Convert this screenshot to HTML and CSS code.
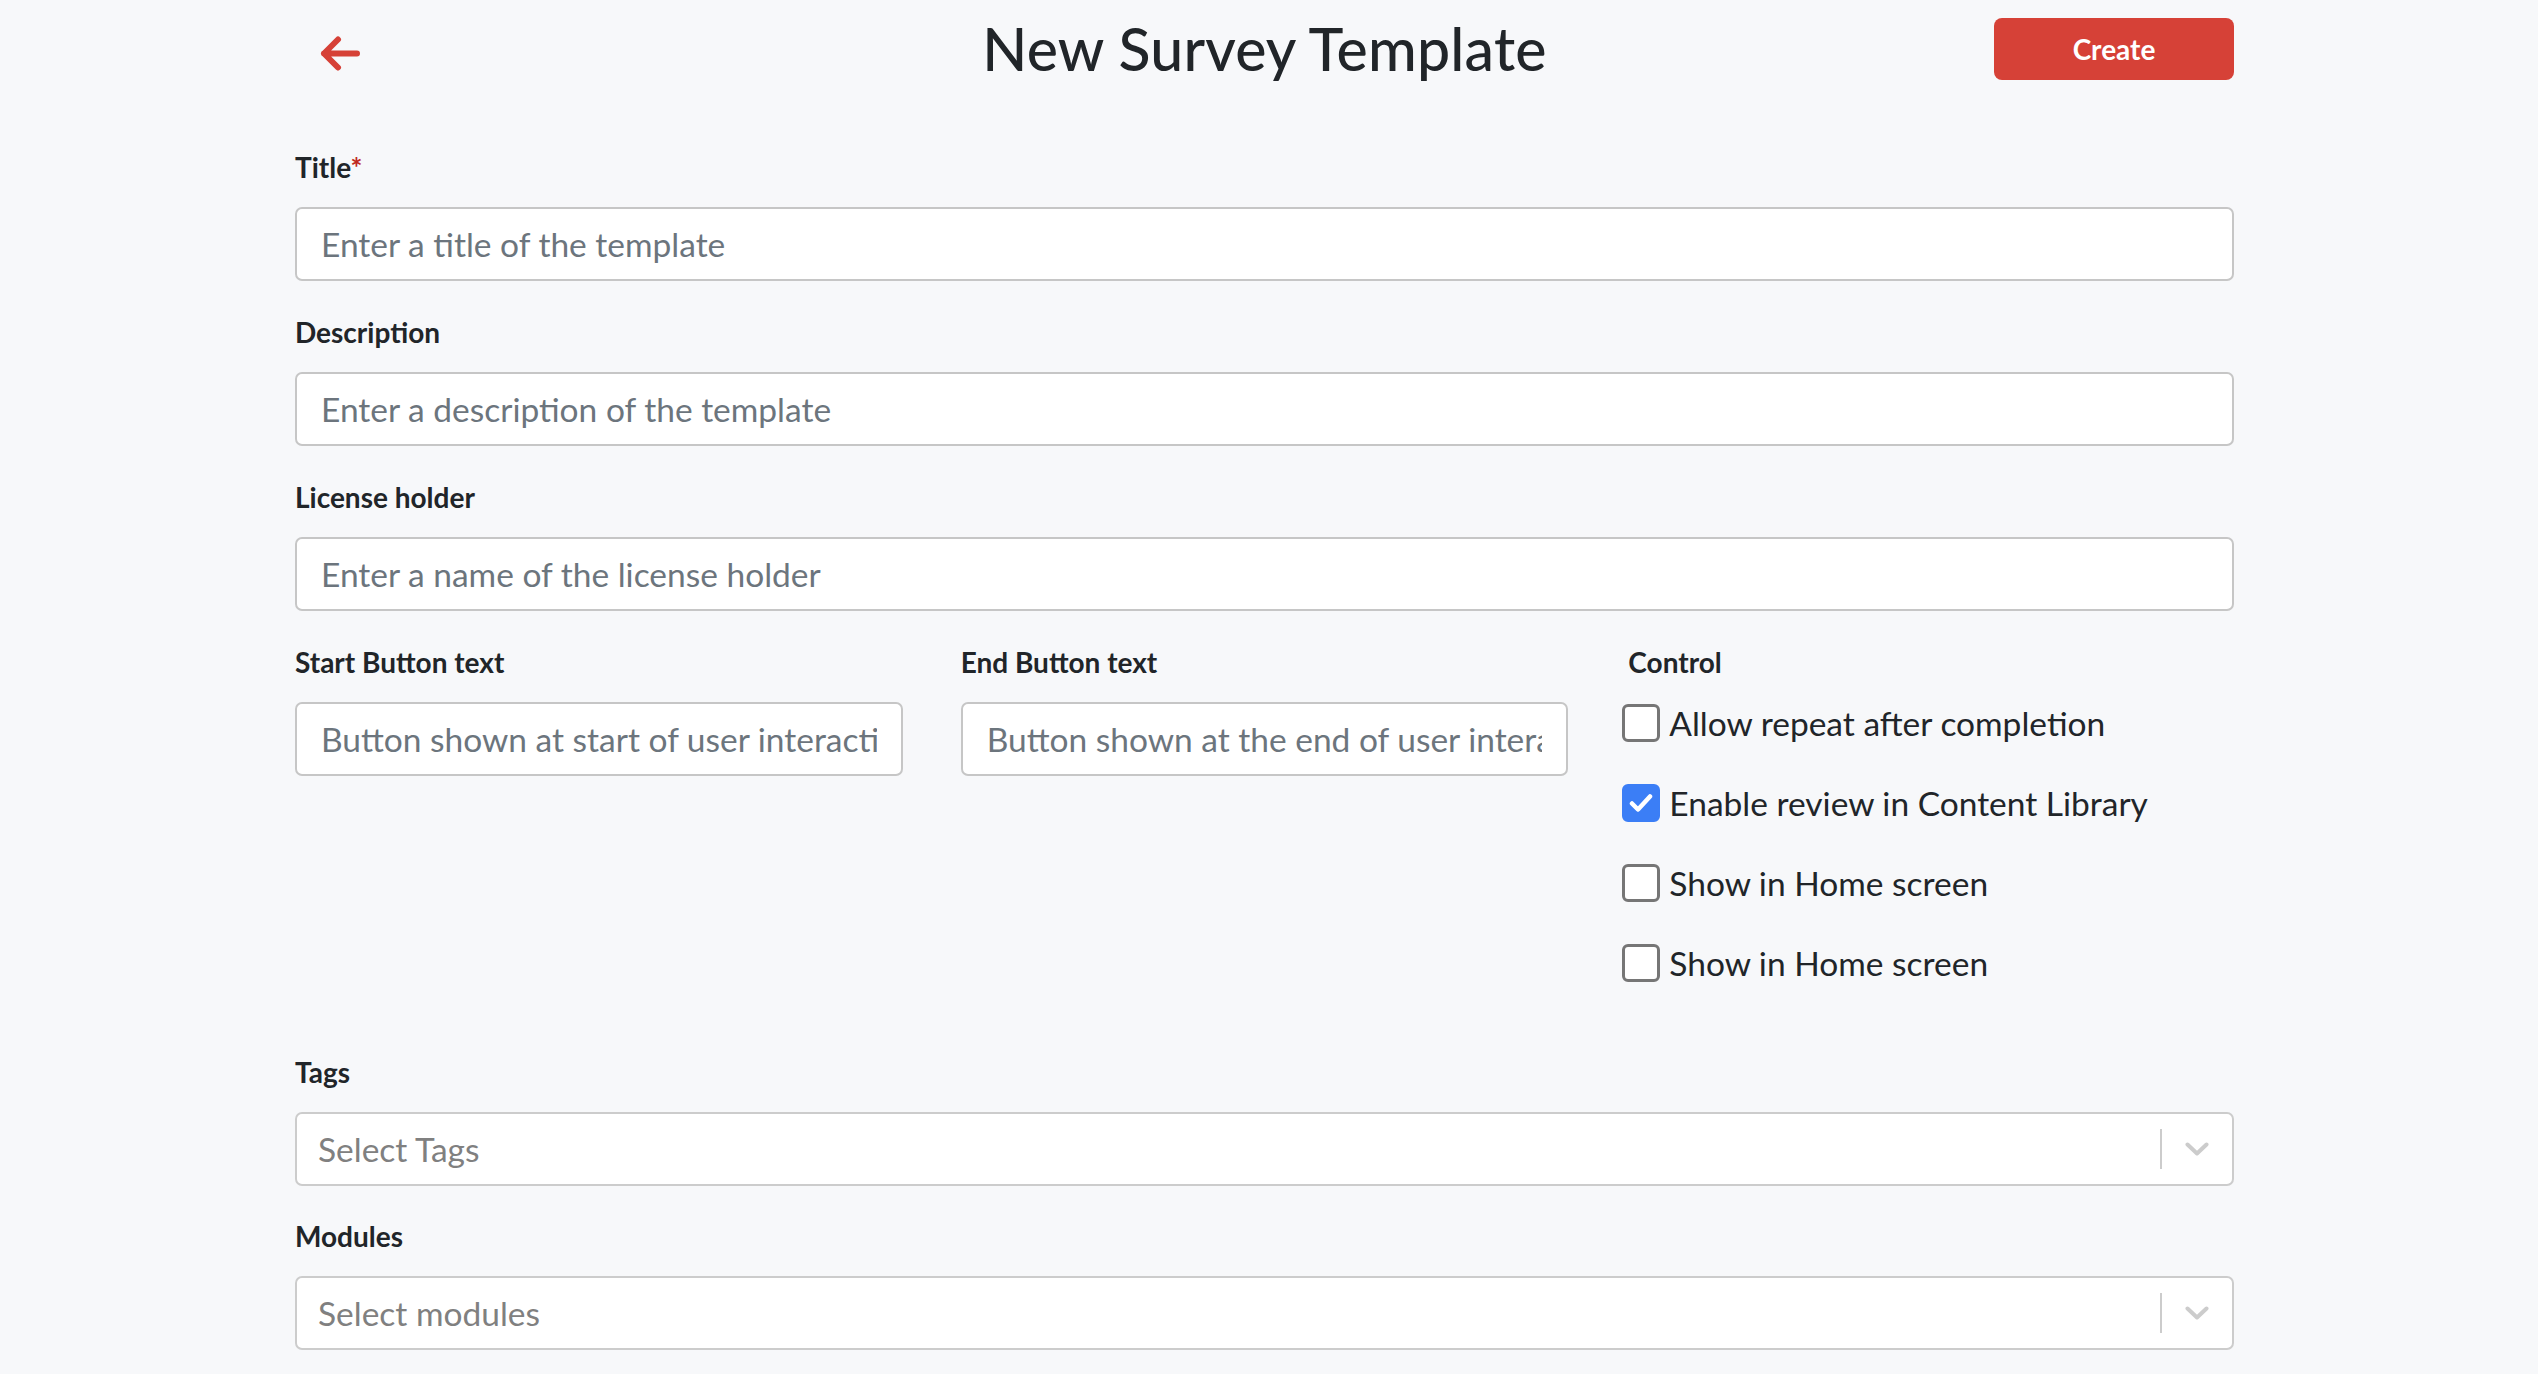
FILE: index.html
```html
<!DOCTYPE html>
<html lang="en">
<head>
<meta charset="utf-8">
<title>New Survey Template</title>
<link rel="stylesheet" href="styles.css">
</head>
<body>
<div class="page">
  <header class="header">
    <a class="back" href="#" aria-label="Back">
      <svg width="40" height="37" viewBox="0 0 40 37" fill="none" stroke="#d64137" stroke-width="6" stroke-linecap="round" stroke-linejoin="round"><path d="M37 18.5H4M18 4.5L4 18.5L18 32.5"/></svg>
    </a>
    <h1 class="page-title">New Survey Template</h1>
    <button class="btn-create" type="button">Create</button>
  </header>

  <form class="form">
    <div class="group">
      <label class="label">Title<span class="req">*</span></label>
      <input class="input" type="text" placeholder="Enter a title of the template">
    </div>
    <div class="group">
      <label class="label">Description</label>
      <input class="input" type="text" placeholder="Enter a description of the template">
    </div>
    <div class="group">
      <label class="label">License holder</label>
      <input class="input" type="text" placeholder="Enter a name of the license holder">
    </div>

    <div class="row">
      <div class="col">
        <label class="label">Start Button text</label>
        <input class="input" type="text" placeholder="Button shown at start of user interaction">
      </div>
      <div class="col">
        <label class="label">End Button text</label>
        <input class="input" type="text" placeholder="Button shown at the end of user interaction">
      </div>
      <div class="col">
        <label class="label label-control">Control</label>
        <div class="checks">
          <div class="check"><span class="box"></span><span class="check-text">Allow repeat after completion</span></div>
          <div class="check"><span class="box box-on"><svg width="24" height="20" viewBox="0 0 24 20" fill="none" stroke="#fff" stroke-width="4.5" stroke-linecap="round" stroke-linejoin="round"><path d="M3 10.5L9 16.5L21 3.5"/></svg></span><span class="check-text">Enable review in Content Library</span></div>
          <div class="check"><span class="box"></span><span class="check-text">Show in Home screen</span></div>
          <div class="check"><span class="box"></span><span class="check-text">Show in Home screen</span></div>
        </div>
      </div>
    </div>

    <div class="group group-select">
      <label class="label">Tags</label>
      <div class="select">
        <span class="select-value">Select Tags</span>
        <span class="select-sep"></span>
        <span class="select-ind"><svg width="24" height="14" viewBox="0 0 24 14" fill="none" stroke="#cccccc" stroke-width="4" stroke-linecap="round" stroke-linejoin="round"><path d="M2.5 2.5L12 11.5L21.5 2.5"/></svg></span>
      </div>
    </div>
    <div class="group group-select">
      <label class="label">Modules</label>
      <div class="select">
        <span class="select-value">Select modules</span>
        <span class="select-sep"></span>
        <span class="select-ind"><svg width="24" height="14" viewBox="0 0 24 14" fill="none" stroke="#cccccc" stroke-width="4" stroke-linecap="round" stroke-linejoin="round"><path d="M2.5 2.5L12 11.5L21.5 2.5"/></svg></span>
      </div>
    </div>
  </form>
</div>
</body>
</html>
```
FILE: styles.css
```css
html, body {
  margin: 0;
  padding: 0;
  background: #f7f8fa;
}
body {
  font-family: Lato, "Open Sans", sans-serif;
  color: #212529;
  overflow: hidden;
}
.page {
  width: 1939px;
  margin-left: 295px;
}
.header {
  height: 98px;
  display: grid;
  grid-template-columns: 1fr auto 1fr;
  align-items: center;
}
.back {
  display: flex;
  padding-left: 25px;
  margin-top: 8px;
  width: 40px;
}
.page-title {
  margin: 0;
  font-size: 59px;
  font-weight: 500;
  line-height: 70px;
  color: #212529;
  letter-spacing: 0.2px;
}
.btn-create {
  justify-self: end;
  width: 240px;
  height: 62px;
  border: 0;
  border-radius: 8px;
  background: #d64137;
  color: #fff;
  font-family: Lato, sans-serif;
  font-size: 28px;
  font-weight: 700;
  padding: 0;
  cursor: pointer;
}
.form {
  margin-top: 53px;
  display: flex;
  flex-direction: column;
}
.group {
  display: flex;
  flex-direction: column;
  margin-bottom: 35px;
}
.group-select {
  margin-bottom: 34px;
}
.label {
  display: block;
  font-size: 28px;
  line-height: 32px;
  font-weight: 700;
  color: #212529;
  margin-bottom: 24px;
}
.req {
  color: #c0281d;
}
.input {
  box-sizing: border-box;
  width: 100%;
  height: 74px;
  border: 2px solid #c6c6c6;
  border-radius: 7px;
  background: #fff;
  padding: 0 24px;
  font-family: Lato, sans-serif;
  font-size: 33.5px;
  color: #212529;
  outline: none;
}
.input::placeholder {
  color: #6c757d;
  opacity: 1;
}
.row {
  display: grid;
  grid-template-columns: 1fr 1fr 1fr;
  column-gap: 58px;
  margin-bottom: 72px;
}
.col {
  display: flex;
  flex-direction: column;
}
.label-control {
  padding-left: 2px;
}
.checks {
  display: flex;
  flex-direction: column;
  gap: 38px;
  margin-left: -4px;
}
.check {
  height: 42px;
  display: flex;
  align-items: center;
  gap: 9px;
}
.box {
  box-sizing: border-box;
  width: 38px;
  height: 38px;
  border: 3px solid #767676;
  border-radius: 6px;
  background: #fff;
  display: flex;
  align-items: center;
  justify-content: center;
  flex: none;
}
.box-on {
  background: #3b7ef6;
  border-color: #3b7ef6;
}
.check-text {
  font-size: 33.5px;
  color: #212529;
  line-height: 42px;
  white-space: nowrap;
}
.select {
  box-sizing: border-box;
  height: 74px;
  border: 2px solid #cccccc;
  border-radius: 7px;
  background: #fff;
  display: flex;
  align-items: center;
}
.select-value {
  flex: 1;
  padding-left: 21px;
  font-size: 33.5px;
  color: #808080;
}
.select-sep {
  width: 2px;
  height: 40px;
  background: #cccccc;
}
.select-ind {
  width: 70px;
  display: flex;
  justify-content: center;
  align-items: center;
}
```
